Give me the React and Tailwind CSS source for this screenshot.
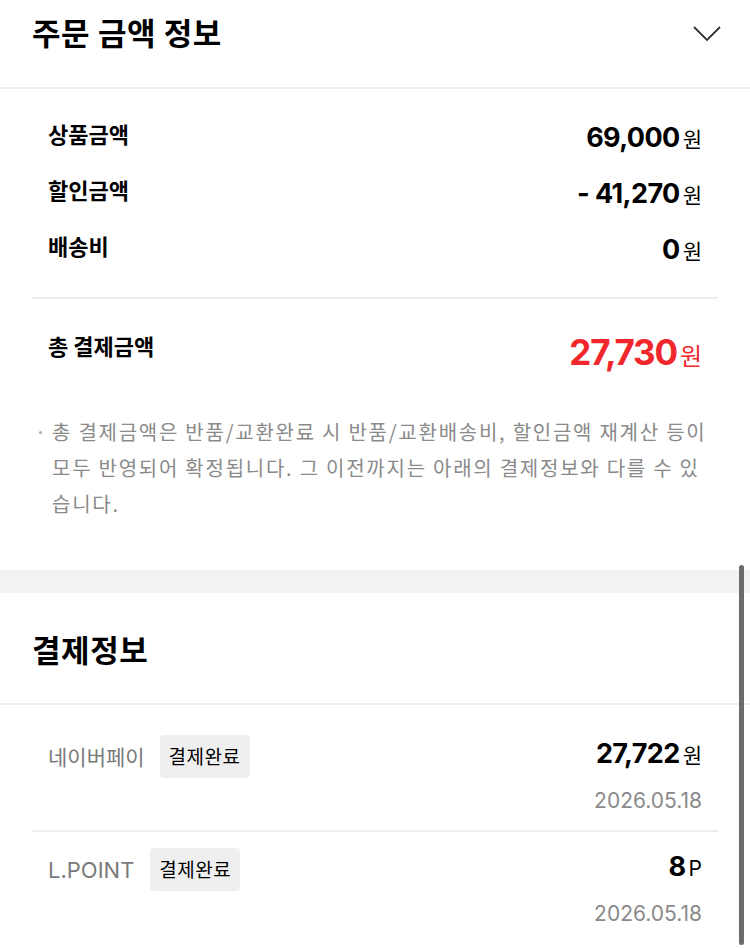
const font = { fontFamily: '"Noto Sans CJK KR", "Noto Sans", sans-serif' };
const num = { fontFamily: 'Inter, "Noto Sans CJK KR", sans-serif' };

function AmountRow({ label, value, unit = "원" }) {
  return (
    <div className="h-[56px] flex items-center justify-between px-4">
      <span className="text-[22px] font-bold text-black leading-none -mt-[8px]">{label}</span>
      <span className="flex items-baseline text-black">
        <span className="text-[27px] font-bold tracking-[-0.6px] leading-none" style={num}>{value}</span>
        <span className="text-[21px] ml-[3px] leading-none">{unit}</span>
      </span>
    </div>
  );
}

function PayRow({ name, amount, unit, date, last, latin }) {
  return (
    <div className={`mx-8 px-4 ${last ? "pt-[16px]" : "pt-[30px] border-b-2 border-[#eee]"} pb-[14px]`}>
      <div className="flex items-center justify-between">
        <div className={`flex items-center ${latin ? "gap-[16px]" : "gap-[15px]"}`}>
          <span
            className={`${latin ? "text-[22px]" : "text-[21px]"} text-[#7a7a7a] leading-none`}
            style={latin ? num : undefined}
          >
            {name}
          </span>
          <span className="h-[43px] px-[9px] flex items-center bg-[#efefef] rounded-[4px] text-[19px] text-black tracking-[0.5px]">결제완료</span>
        </div>
        <span className="flex items-baseline text-black -mt-[6px]">
          <span className="text-[27px] font-bold tracking-[-0.6px] leading-none" style={num}>{amount}</span>
          <span className="text-[21px] ml-[3px] leading-none" style={unit === "P" ? num : undefined}>{unit}</span>
        </span>
      </div>
      <div className="text-right text-[21px] text-[#8a8a8a] mt-[8px] leading-[30px]" style={num}>{date}</div>
    </div>
  );
}

export default function App() {
  return (
    <div className="w-[750px] h-[948px] bg-white relative overflow-hidden" style={font}>
      <div className="h-[89px] px-8 pt-[9px] flex items-start justify-between border-b-2 border-[#eee]">
        <h2 className="text-[31px] font-bold text-black leading-[46px] tracking-[0.6px]">주문 금액 정보</h2>
        <svg width="30" height="18" viewBox="0 0 30 18" className="mt-[16px] mr-[-4px]">
          <path d="M2 2 L15 15 L28 2" fill="none" stroke="#333" strokeWidth="1.8" />
        </svg>
      </div>

      <div className="mx-8 pt-[20px] pb-[20px] border-b-2 border-[#eee]">
        <AmountRow label="상품금액" value="69,000" />
        <AmountRow label="할인금액" value="- 41,270" />
        <AmountRow label="배송비" value="0" />
      </div>

      <div className="mx-8 px-4 pt-[30px] flex justify-between">
        <span className="text-[22px] font-bold text-black leading-[32px]">총 결제금액</span>
        <span className="flex items-baseline text-[#f0282d] mt-[6px]">
          <span className="text-[35px] font-bold tracking-[-1.2px] leading-none" style={num}>27,730</span>
          <span className="text-[24px] ml-[3px] leading-none">원</span>
        </span>
      </div>

      <div className="pl-[52px] pr-4 pt-[44px] pb-[48px] relative">
        <span className="absolute left-[39px] top-[61px] w-[3px] h-[3px] rounded-full bg-[#aaa]" />
        <p className="text-[20px] text-[#8a8a8a] leading-[36px] tracking-[1.75px] whitespace-nowrap">
          총 결제금액은 반품/교환완료 시 반품/교환배송비, 할인금액 재계산 등이
          <br />
          모두 반영되어 확정됩니다. 그 이전까지는 아래의 결제정보와 다를 수 있
          <br />
          습니다.
        </p>
      </div>

      <div className="h-[23px] bg-[#f2f2f2]" />

      <div className="h-[112px] px-8 flex items-center border-b-2 border-[#eee]">
        <h2 className="text-[31px] font-bold text-black leading-none tracking-[0.6px]">결제정보</h2>
      </div>

      <PayRow name="네이버페이" amount="27,722" unit="원" date="2026.05.18" />
      <PayRow name="L.POINT" amount="8" unit="P" date="2026.05.18" last latin />

      <div className="absolute right-[6px] top-[565px] w-[5px] h-[380px] rounded-full bg-[#6b6b6b]" />
    </div>
  );
}
